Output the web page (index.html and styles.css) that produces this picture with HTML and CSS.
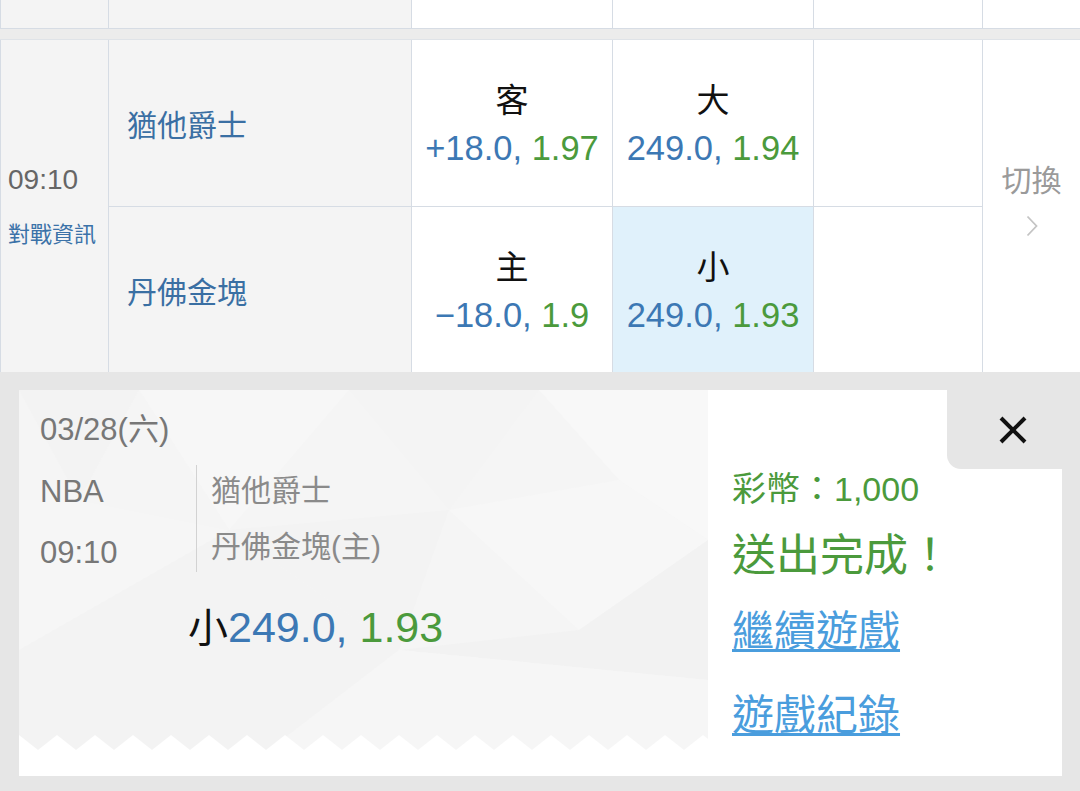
FILE: index.html
```html
<!DOCTYPE html>
<html lang="zh-Hant">
<head>
<meta charset="utf-8">
<title>Bet</title>
<link rel="stylesheet" href="styles.css">
</head>
<body>
<div class="page">
  <div class="grid top-row">
    <div class="cell cell-grey"></div>
    <div class="cell cell-grey"></div>
    <div class="cell"></div>
    <div class="cell"></div>
    <div class="cell"></div>
    <div class="cell"></div>
  </div>
  <div class="band"></div>
  <div class="grid main-row">
    <div class="cell cell-grey time-col">
      <div class="time">09:10</div>
      <div class="info-link">對戰資訊</div>
    </div>
    <div class="cell cell-grey team">猶他爵士</div>
    <div class="cell odds">
      <div class="odds-label">客</div>
      <div class="odds-val"><span class="blue">+18.0, </span><span class="green">1.97</span></div>
    </div>
    <div class="cell odds">
      <div class="odds-label">大</div>
      <div class="odds-val"><span class="blue">249.0, </span><span class="green">1.94</span></div>
    </div>
    <div class="cell"></div>
    <div class="cell switch-col">
      <div class="switch-text">切換</div>
      <svg class="chev" width="12" height="22" viewBox="0 0 12 22"><polyline points="1.5,1.5 10.5,11 1.5,20.5" fill="none" stroke="#c4c4c4" stroke-width="1.8"/></svg>
    </div>
    <div class="cell cell-grey team">丹佛金塊</div>
    <div class="cell odds">
      <div class="odds-label">主</div>
      <div class="odds-val"><span class="blue">−18.0, </span><span class="green">1.9</span></div>
    </div>
    <div class="cell odds selected">
      <div class="odds-label">小</div>
      <div class="odds-val"><span class="blue">249.0, </span><span class="green">1.93</span></div>
    </div>
    <div class="cell"></div>
  </div>

  <div class="ticket-area">
    <div class="ticket">
      <div class="ticket-left">
        <div class="pattern-area">
          <svg class="pattern" width="689" height="360" viewBox="0 0 689 360" preserveAspectRatio="none">
            <rect width="689" height="360" fill="#f5f5f5"/>
            <polygon points="0,0 120,0 60,110" fill="#f3f3f3"/>
            <polygon points="120,0 330,0 210,140" fill="#f7f7f7"/>
            <polygon points="330,0 520,0 430,120" fill="#f4f4f4"/>
            <polygon points="520,0 689,0 689,150 600,90" fill="#f8f8f8"/>
            <polygon points="0,110 60,110 210,140 0,260" fill="#f6f6f6"/>
            <polygon points="210,140 430,120 380,260" fill="#f3f3f3"/>
            <polygon points="430,120 600,90 689,150 560,240" fill="#f7f7f7"/>
            <polygon points="0,260 210,140 380,260 250,360 0,360" fill="#f3f3f3"/>
            <polygon points="380,260 560,240 689,150 689,290" fill="#f2f2f2"/>
            <polygon points="380,260 689,290 689,360 250,360" fill="#f6f6f6"/>
            <polygon points="60,110 210,140 120,0" fill="#f5f5f5"/>
          </svg>
          <svg class="zigzag" width="689" height="15" viewBox="0 0 689 15">
            <defs>
              <pattern id="zz" width="38" height="15" patternUnits="userSpaceOnUse">
                <polygon points="0,0 19,15 0,15" fill="#ffffff"/>
                <polygon points="38,0 38,15 19,15" fill="#ffffff"/>
              </pattern>
            </defs>
            <rect width="689" height="15" fill="url(#zz)"/>
          </svg>
          <div class="ticket-content">
            <div class="date">03/28(六)</div>
            <div class="info">
              <div class="meta">
                <div class="meta-league">NBA</div>
                <div class="meta-time">09:10</div>
              </div>
              <div class="divider"></div>
              <div class="teams">
                <div class="team-line">猶他爵士</div>
                <div class="team-line">丹佛金塊(主)</div>
              </div>
            </div>
            <div class="bet"><span class="bet-label">小</span><span class="blue">249.0, </span><span class="green">1.93</span></div>
          </div>
        </div>
      </div>
      <div class="ticket-right">
        <div class="close-tab">
          <svg width="28" height="28" viewBox="0 0 28 28"><line x1="2" y1="2" x2="26" y2="26" stroke="#111" stroke-width="4"/><line x1="26" y1="2" x2="2" y2="26" stroke="#111" stroke-width="4"/></svg>
        </div>
        <div class="result">
          <div class="coins">彩幣：1,000</div>
          <div class="done">送出完成！</div>
          <a class="link link-first" href="#">繼續遊戲</a>
          <a class="link link-second" href="#">遊戲紀錄</a>
        </div>
      </div>
    </div>
  </div>
</div>
</body>
</html>
```

FILE: styles.css
```css
* { box-sizing: border-box; }
html, body { margin: 0; padding: 0; }
body {
  width: 1080px;
  height: 791px;
  overflow: hidden;
  background: #e6e6e6;
  font-family: "Liberation Sans", "Noto Sans CJK TC", sans-serif;
}
.page { width: 1080px; }

.grid {
  display: grid;
  grid-template-columns: 107px 302px 200px 200px 168px 1fr;
  column-gap: 1px;
  row-gap: 1px;
  background: #d6dce4;
  padding-left: 1px;
}
.top-row { height: 28px; }
.cell { background: #ffffff; }
.cell-grey { background: #f4f4f4; }

.band {
  height: 12px;
  background: #ececec;
  border-top: 1px solid #d6dce4;
  border-bottom: 1px solid #dfe3e8;
}

.main-row {
  grid-template-rows: 166px 165px;
}
.time-col {
  grid-row: 1 / span 2;
  display: flex;
  flex-direction: column;
  justify-content: center;
  padding-left: 7px;
  gap: 16px;
}
.time {
  font-size: 28px;
  line-height: 36px;
  color: #666666;
}
.info-link {
  font-size: 22px;
  line-height: 36px;
  color: #3b72a8;
  font-family: "Noto Sans CJK TC", sans-serif;
}
.team {
  display: flex;
  align-items: center;
  padding-left: 18px;
  font-size: 30px;
  color: #3a6fa3;
  font-family: "Noto Sans CJK TC", sans-serif;
}
.odds {
  display: flex;
  flex-direction: column;
  align-items: center;
  justify-content: center;
}
.odds.selected { background: #e0f1fb; }
.odds-label {
  font-family: "Noto Sans CJK TC", sans-serif;
  font-size: 33px;
  line-height: 50px;
  color: #111111;
}
.odds-val {
  font-size: 34.5px;
  line-height: 50px;
  white-space: pre;
}
.blue { color: #3c78b4; }
.green { color: #4b9a3c; }

.switch-col {
  grid-row: 1 / span 2;
  grid-column: 6;
  display: flex;
  flex-direction: column;
  align-items: center;
  justify-content: center;
  padding-bottom: 16px;
}
.switch-text {
  font-family: "Noto Sans CJK TC", sans-serif;
  font-size: 30px;
  line-height: 36px;
  color: #9a9a9a;
}
.chev { margin-top: 19px; }

.ticket-area {
  padding: 18px 18px 0 19px;
}
.ticket {
  display: flex;
  height: 386px;
  width: 1043px;
  background: #ffffff;
}
.ticket-left {
  width: 689px;
  height: 386px;
  background: #ffffff;
}
.pattern-area {
  position: relative;
  height: 360px;
}
.pattern {
  position: absolute;
  left: 0;
  top: 0;
}
.zigzag {
  position: absolute;
  left: 0;
  bottom: 0;
}
.ticket-content {
  position: relative;
  padding: 20px 0 0 21px;
  color: #777777;
}
.date {
  font-size: 31px;
  line-height: 40px;
}
.info {
  display: flex;
  margin-top: 12px;
}
.meta {
  width: 156px;
  font-size: 31px;
}
.meta-league { line-height: 60px; }
.meta-time { line-height: 62px; }
.divider {
  width: 1px;
  height: 107px;
  margin-top: 3px;
  background: #d2d2d2;
}
.teams {
  padding-left: 14px;
  padding-top: 1px;
  font-size: 30px;
  color: #8a8a8a;
}
.team-line { line-height: 56px; }
.bet {
  margin-left: 148px;
  margin-top: 10px;
  font-size: 43px;
  line-height: 62px;
  white-space: pre;
}
.bet-label {
  color: #111111;
  font-family: "Noto Sans CJK TC", sans-serif;
  font-size: 40px;
}

.ticket-right {
  flex: 1;
  position: relative;
  background: #ffffff;
}
.close-tab {
  position: absolute;
  right: 0;
  top: 0;
  width: 115px;
  height: 79px;
  background: #e6e6e6;
  border-bottom-left-radius: 14px;
  display: flex;
  align-items: center;
  justify-content: center;
  padding-left: 17px;
}
.result {
  padding: 80px 0 0 24px;
  display: flex;
  flex-direction: column;
  align-items: flex-start;
}
.coins {
  font-size: 34px;
  line-height: 38px;
  color: #4b9a3c;
}
.done {
  font-family: "Noto Sans CJK TC", sans-serif;
  font-size: 44px;
  line-height: 60px;
  margin-top: 14px;
  color: #4b9a3c;
}
.link {
  font-family: "Noto Sans CJK TC", sans-serif;
  font-size: 42px;
  line-height: 60px;
  color: #4a9ddd;
  text-decoration: underline;
  text-decoration-thickness: 3px;
  text-underline-offset: 3px;
}
.link-first { margin-top: 16px; }
.link-second { margin-top: 24px; }
```
